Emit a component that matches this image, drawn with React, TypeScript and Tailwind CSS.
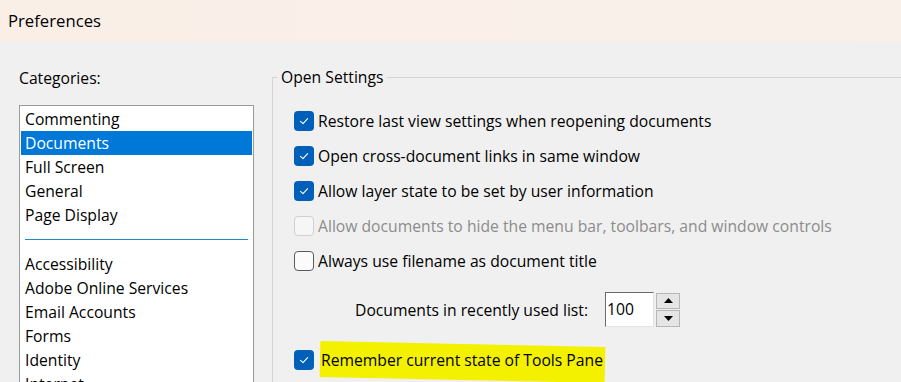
import React from 'react';

const font = { fontFamily: '"Open Sans", "Noto Sans", sans-serif' };

const topCategories = ['Commenting', 'Documents', 'Full Screen', 'General', 'Page Display'];
const moreCategories = ['Accessibility', 'Adobe Online Services', 'Email Accounts', 'Forms', 'Identity', 'Internet'];

function CheckBox({ checked, disabled }: { checked?: boolean; disabled?: boolean }) {
  if (checked) {
    return (
      <span className="flex h-[20px] w-[20px] shrink-0 items-center justify-center rounded-[4px] bg-[#005fb8]">
        <svg width="12" height="12" viewBox="0 0 12 12" fill="none">
          <path d="M2.5 6.3 L5 8.6 L9.6 3.6" stroke="white" strokeWidth="1.1" strokeLinecap="round" strokeLinejoin="round" />
        </svg>
      </span>
    );
  }
  return (
    <span
      className={
        disabled
          ? 'h-[20px] w-[20px] shrink-0 rounded-[4px] border border-[#d0d0d0] bg-[#f6f6f6]'
          : 'h-[20px] w-[20px] shrink-0 rounded-[4px] border border-[#5c5c5c] bg-[#fbfbfb]'
      }
    />
  );
}

function Option({ label, checked, disabled }: { label: string; checked?: boolean; disabled?: boolean }) {
  return (
    <div className="flex h-[35px] items-center gap-[4px] pl-[21px]">
      <CheckBox checked={checked} disabled={disabled} />
      <span className={disabled ? 'text-[#8c8c8c]' : 'text-black'}>{label}</span>
    </div>
  );
}

export default function App() {
  return (
    <div className="h-[382px] w-[901px] overflow-hidden bg-[#f0f0f0] text-[15.7px] leading-[20px]" style={font}>
      <div className="flex h-[41px] items-center bg-gradient-to-r from-[#faefe7] to-[#f9f0ea] pl-[8px] text-[16.7px] text-black">
        Preferences
      </div>

      <div className="flex pt-[27px]">
        <div className="ml-[19px] w-[235px] shrink-0">
          <div className="h-[20px] text-black">Categories:</div>
          <div className="mt-[17px] h-[300px] border border-[#9a9a9a] bg-white px-[1px] pt-[1px]">
            {topCategories.map((c) => (
              <div
                key={c}
                className={
                  c === 'Documents'
                    ? 'flex h-[24px] items-center bg-[#0078d7] px-[4px] text-white'
                    : 'flex h-[24px] items-center px-[4px] text-black'
                }
              >
                {c}
              </div>
            ))}
            <div className="flex h-[25px] items-center px-[4px]">
              <div className="h-[1px] w-full bg-[#1f8bc6]" />
            </div>
            {moreCategories.map((c) => (
              <div key={c} className="flex h-[24px] items-center px-[4px] text-black">
                {c}
              </div>
            ))}
          </div>
        </div>

        <fieldset className="ml-[18px] mt-[-1px] h-[320px] flex-1 border-l border-t border-[#d4d4d4]">
          <legend className="ml-[4px] px-[4px] text-black">Open Settings</legend>
          <div className="pt-[16px]">
            <Option label="Restore last view settings when reopening documents" checked />
            <Option label="Open cross-document links in same window" checked />
            <Option label="Allow layer state to be set by user information" checked />
            <Option label="Allow documents to hide the menu bar, toolbars, and window controls" disabled />
            <Option label="Always use filename as document title" />

            <div className="mt-[14px] flex h-[35px] items-center pl-[82px]">
              <span className="text-black">Documents in recently used list:</span>
              <div className="ml-[17px] flex h-[35px] w-[49px] items-center border border-b-[#e3e3e3] border-l-[#6b6b6b] border-r-[#e3e3e3] border-t-[#6b6b6b] bg-white pb-[2px] pl-[1px] text-black">
                100
              </div>
              <div className="ml-[2px] flex h-[34px] w-[24px] flex-col gap-[1px]">
                <div className="flex flex-1 items-center justify-center border border-[#b5b5b5] bg-[#e5e5e5]">
                  <svg width="9" height="5" viewBox="0 0 9 5"><path d="M0 5 L4.5 0 L9 5 Z" fill="black" /></svg>
                </div>
                <div className="flex flex-1 items-center justify-center border border-[#b5b5b5] bg-[#e5e5e5]">
                  <svg width="9" height="5" viewBox="0 0 9 5"><path d="M0 0 L9 0 L4.5 5 Z" fill="black" /></svg>
                </div>
              </div>
            </div>

            <div className="mt-[15px] flex h-[35px] items-center gap-[7px] pl-[21px]">
              <CheckBox checked />
              <span className="relative text-black">
                <span className="absolute -left-[1px] -right-[2px] top-[-9px] bottom-[-7px] origin-left rotate-[1.2deg] bg-[#f4f100]" />
                <span className="relative">Remember current state of Tools Pane</span>
              </span>
            </div>
          </div>
        </fieldset>
      </div>
    </div>
  );
}
